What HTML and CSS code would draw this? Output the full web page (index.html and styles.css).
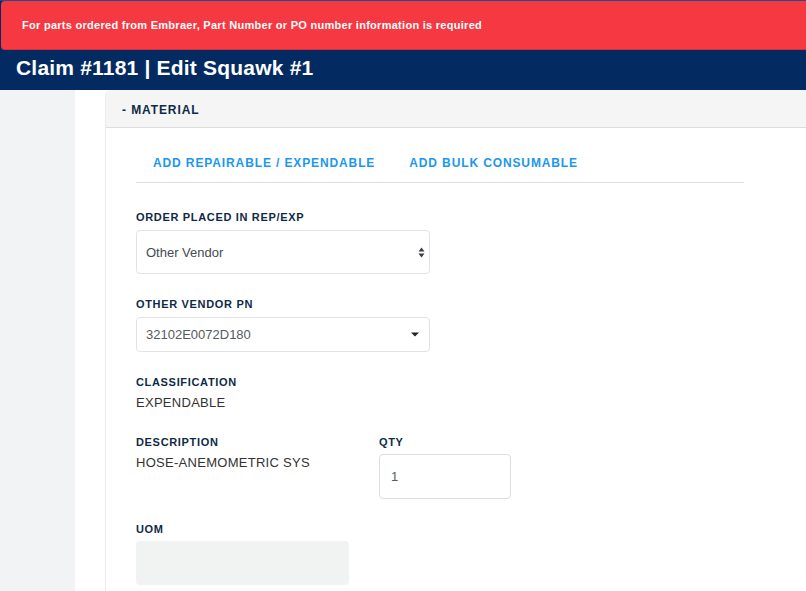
FILE: index.html
```html
<!DOCTYPE html>
<html>
<head>
<meta charset="utf-8">
<link rel="stylesheet" href="styles.css">
</head>
<body>
<div class="toast">For parts ordered from Embraer, Part Number or PO number information is required</div>
<header class="topbar"><h1 class="title">Claim #1181 | Edit Squawk #1</h1></header>
<div class="layout">
  <aside class="sidebar"></aside>
  <main class="content">
    <section class="panel">
      <div class="panel-head">- MATERIAL</div>
      <div class="panel-body">
        <div class="tabs">
          <a class="tab">ADD REPAIRABLE / EXPENDABLE</a>
          <a class="tab">ADD BULK CONSUMABLE</a>
        </div>
        <div class="form">
          <div class="field field-a">
            <div class="label">ORDER PLACED IN REP/EXP</div>
            <div class="select select-tall">
              <span>Other Vendor</span>
              <svg class="updown" width="7" height="11" viewBox="0 0 7 11"><path d="M3.5 0.5 L6.5 4.5 H0.5 Z M3.5 10.5 L6.5 6.5 H0.5 Z" fill="#3a3f47"/></svg>
            </div>
          </div>
          <div class="field field-a">
            <div class="label">OTHER VENDOR PN</div>
            <div class="select select-short">
              <span class="muted">32102E0072D180</span>
              <svg class="caret" width="8" height="5" viewBox="0 0 8 5"><path d="M0 0.5 H8 L4 4.5 Z" fill="#222"/></svg>
            </div>
          </div>
          <div class="field field-b">
            <div class="label">CLASSIFICATION</div>
            <div class="value">EXPENDABLE</div>
          </div>
          <div class="row">
            <div class="col-desc">
              <div class="label">DESCRIPTION</div>
              <div class="value">HOSE-ANEMOMETRIC SYS</div>
            </div>
            <div class="col-qty">
              <div class="label label-tight">QTY</div>
              <div class="input">1</div>
            </div>
          </div>
          <div class="field">
            <div class="label label-tight">UOM</div>
            <div class="input-disabled"></div>
          </div>
        </div>
      </div>
    </section>
  </main>
</div>
</body>
</html>
```
FILE: styles.css
```css
* { box-sizing: border-box; }
html, body { margin: 0; padding: 0; }
body {
  font-family: "Liberation Sans", Arial, sans-serif;
  background: #ffffff;
  width: 806px;
  height: 591px;
  overflow: hidden;
  position: relative;
}
.toast {
  position: absolute;
  left: 1px;
  top: 1px;
  width: 820px;
  height: 49px;
  background: #f53841;
  border-bottom: 1px solid #d8303a;
  border-radius: 4px;
  color: #ffffff;
  font-size: 11px;
  font-weight: bold;
  line-height: 48px;
  padding-left: 21px;
  letter-spacing: 0.28px;
  z-index: 5;
}
.topbar {
  background: #032b62;
  height: 90px;
  border-top: 1px solid #1e4f8c;
  display: flex;
  align-items: flex-end;
}
.title {
  margin: 0 0 9px 16px;
  color: #ffffff;
  font-size: 21px;
  font-weight: bold;
  line-height: 26px;
  letter-spacing: 0.2px;
}
.layout {
  display: flex;
  height: 501px;
}
.sidebar {
  width: 75px;
  background: #f2f3f5;
  flex: none;
}
.content {
  flex: 1;
  padding-left: 30px;
}
.panel {
  border-left: 1px solid #ebebeb;
  border-top-left-radius: 5px;
  height: 100%;
}
.panel-head {
  background: #f5f5f5;
  height: 38px;
  border-bottom: 1px solid #dddddd;
  border-top-left-radius: 5px;
  padding: 3px 0 0 16px;
  font-size: 12px;
  font-weight: bold;
  color: #0f2a47;
  letter-spacing: 0.9px;
  line-height: 34px;
}
.panel-body {
  padding: 0 0 0 30px;
}
.tabs {
  width: 608px;
  display: flex;
  border-bottom: 1px solid #dddddd;
  padding-top: 25px;
  padding-bottom: 9px;
}
.tab {
  padding: 0 17px;
  font-size: 12px;
  font-weight: bold;
  line-height: 20px;
  color: #1b97ef;
  letter-spacing: 0.88px;
}
.form {
  padding-top: 27px;
  width: 608px;
}
.field { margin-bottom: 23px; }
.field-b { margin-bottom: 24px; }
.row {
  display: flex;
  margin-bottom: 23px;
}
.col-desc { width: 243px; }
.col-qty { width: 132px; }
.label {
  font-size: 11px;
  font-weight: bold;
  color: #0f2a47;
  line-height: 14px;
  letter-spacing: 0.67px;
  margin-bottom: 6px;
}
.label-tight { margin-bottom: 5px; }
.value {
  font-size: 13px;
  line-height: 16px;
  color: #333333;
  letter-spacing: 0.28px;
}
.select {
  width: 294px;
  border: 1px solid #dfe3e8;
  border-radius: 4px;
  display: flex;
  align-items: center;
  justify-content: space-between;
  font-size: 13px;
  color: #444a50;
}
.muted { color: #555b62; }
.select-tall {
  height: 44px;
  padding: 0 4px 0 9px;
}
.select-short {
  height: 35px;
  padding: 0 10px 0 9px;
}
.input {
  height: 45px;
  width: 132px;
  border: 1px solid #d9dee4;
  border-radius: 4px;
  font-size: 13px;
  color: #555b62;
  line-height: 43px;
  padding-left: 11px;
}
.input-disabled {
  width: 213px;
  height: 44px;
  background: #f1f2f2;
  border-radius: 4px;
}
```
